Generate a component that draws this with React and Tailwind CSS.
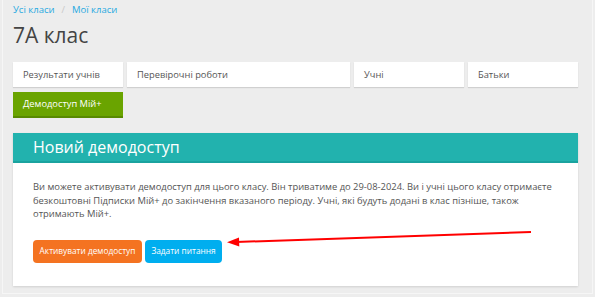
import React from "react";

const tabs = [
  { label: "Результати учнів", w: "w-[110px]" },
  { label: "Перевірочні роботи", w: "w-[223px]" },
  { label: "Учні", w: "w-[110px]" },
  { label: "Батьки", w: "w-[110px]" },
];

export default function App() {
  return (
    <div className="w-[595px] h-[297px] bg-[#ededed] overflow-hidden font-['Open_Sans',sans-serif]">
      <div className="relative mx-[2px] h-[294px] border-x border-b border-[#f6f6f6] pl-[10px] pr-[14px]">
        {/* breadcrumb */}
        <div className="flex items-center gap-[7px] pt-[3px] text-[9.5px] leading-[14px]">
          <span className="text-[#27a9e1]">Усі класи</span>
          <span className="text-[#c8c8c8]">/</span>
          <span className="text-[#27a9e1]">Мої класи</span>
        </div>
        <h1 className="mt-[4px] text-[21px] leading-[28px] text-[#444]">7А клас</h1>

        {/* tabs */}
        <div className="mt-[13px] flex gap-[4px]">
          {tabs.map((t) => (
            <div
              key={t.label}
              className={`${t.w} h-[25px] bg-white shadow-[0_1px_1px_rgba(0,0,0,0.12)] flex items-center pl-[10px] text-[9.3px] text-[#555]`}
            >
              {t.label}
            </div>
          ))}
        </div>
        <div className="mt-[5px] w-[110px] h-[26px] bg-[#6aa400] border-b-2 border-[#588a00] flex items-center pl-[10px] text-[9.3px] text-white">
          Демодоступ Мій+
        </div>

        {/* card */}
        <div className="mt-[15px] bg-white shadow-[0_1px_2px_rgba(0,0,0,0.12)]">
          <div className="h-[30px] bg-[#22b2ae] border-b-2 border-[#1aa39f] flex items-center pl-[20px] text-[16px] text-white">
            Новий демодоступ
          </div>
          <div className="px-[20px] pt-[17px] pb-[23px]">
            <p className="text-[9.4px] leading-[13.5px] text-[#555]">
              Ви можете активувати демодоступ для цього класу. Він триватиме до 29-08-2024. Ви і учні цього класу отримаєте
              безкоштовні Підписки Мій+ до закінчення вказаного періоду. Учні, які будуть додані в клас пізніше, також
              отримають Мій+.
            </p>
            <div className="mt-[19px] flex gap-[3px]">
              <button className="h-[23px] w-[109px] rounded-[4px] bg-[#f47321] text-white text-[8.3px]">
                Активувати демодоступ
              </button>
              <button className="h-[23px] w-[77px] rounded-[4px] bg-[#00aeef] text-white text-[8.3px]">
                Задати питання
              </button>
            </div>
          </div>
        </div>

        {/* annotation arrow */}
        <svg className="absolute left-[-3px] top-0 pointer-events-none" width="595" height="297">
          <line x1="531" y1="232" x2="236" y2="242" stroke="#f00" strokeWidth="2" />
          <path d="M227 242.3 L239 237.6 L239.3 246.6 Z" fill="#f00" />
        </svg>
      </div>
    </div>
  );
}
